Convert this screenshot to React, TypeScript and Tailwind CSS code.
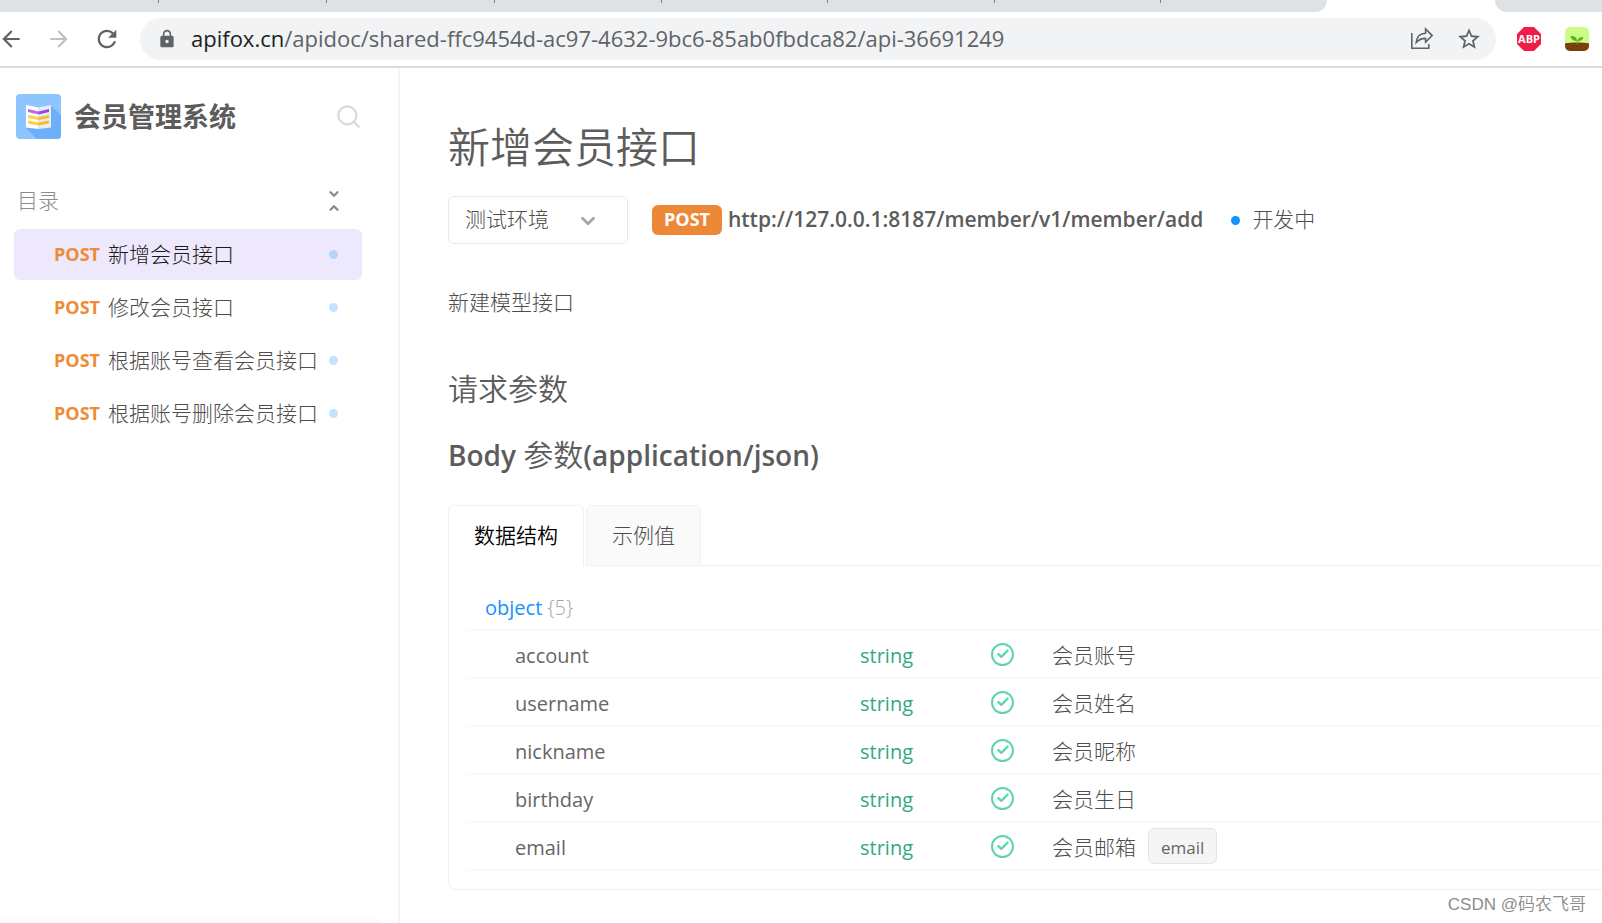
import { Check, ChevronDown, ChevronUp, Search } from 'lucide-react';
import { MdArrowBack, MdArrowForward, MdLock, MdRefresh, MdStarBorder } from 'react-icons/md';

const tabMarks = [158, 326, 494, 661, 827, 994, 1160];

const apis = [
  { name: '新增会员接口', active: true },
  { name: '修改会员接口', active: false },
  { name: '根据账号查看会员接口', active: false },
  { name: '根据账号删除会员接口', active: false },
];

const fields = [
  { name: 'account', type: 'string', desc: '会员账号' },
  { name: 'username', type: 'string', desc: '会员姓名' },
  { name: 'nickname', type: 'string', desc: '会员昵称' },
  { name: 'birthday', type: 'string', desc: '会员生日' },
  { name: 'email', type: 'string', desc: '会员邮箱', format: 'email' },
];

function ShareIcon() {
  return (
    <svg width="24" height="24" viewBox="0 0 24 24" fill="none" stroke="#5f6368" strokeWidth="1.6">
      <path d="M1.8 6v15.2h17V17" />
      <path d="M6.2 15.5C6.6 10 10 6.4 15.6 6.2V2l6.6 6.6-6.6 6.4v-3.6c-4 0-6.8 1.2-9.4 4.1z" />
    </svg>
  );
}

function AbpIcon() {
  return (
    <svg width="24" height="24" viewBox="0 0 24 24">
      <path d="M7 0h10l7 7v10l-7 7H7l-7-7V7z" fill="#f01e46" />
      <text
        x="12"
        y="16"
        textAnchor="middle"
        className="fill-white font-['Open_Sans',sans-serif] text-[11px] font-bold"
      >
        ABP
      </text>
    </svg>
  );
}

function SproutIcon() {
  return (
    <svg width="24" height="24" viewBox="0 0 24 24">
      <defs>
        <clipPath id="sprout">
          <rect width="24" height="24" rx="5" />
        </clipPath>
      </defs>
      <g clipPath="url(#sprout)">
        <rect width="24" height="24" fill="#cdfc86" />
        <path d="M0 16.5c4-1.4 20-1.4 24 0V24H0z" fill="#7a3f0a" />
        <path
          d="M5.5 9c4-.3 6.5 1.5 6.7 4.8C8.5 14.3 6 12.5 5.5 9zM18.500 10c-3.500-.2-5.700 1.100-6.200 4 3.200.3 5.400-1 6.200-4z"
          fill="#58b41c"
        />
        <path d="M12.3 13.5v4" stroke="#58b41c" strokeWidth="1" />
      </g>
    </svg>
  );
}

function BookLogo() {
  return (
    <svg width="45" height="45" viewBox="0 0 45 45" className="shrink-0">
      <rect width="45" height="45" rx="4" fill="#8cc5ff" />
      <path d="M35 12l10 9v20a4 4 0 0 1-4 4H21L10 34z" fill="#6cb0fa" />
      <path d="M10 11l12.5 2.5V35L10 33.5z" fill="#fff" />
      <path d="M35 11l-12.5 2.5V35L35 33.5z" fill="#e9edf2" />
      <path d="M12 15l10.5 2.5v3L12 18z" fill="#b568ee" />
      <path d="M33 15l-10.5 2.5v3L33 18z" fill="#9a45dc" />
      <path d="M12 21l10.5 2v3L12 24zM12 26.5l10.5 2v3L12 29.5z" fill="#ffd042" />
      <path d="M33 21l-10.5 2v3L33 24zM33 26.5l-10.5 2v3L33 29.5z" fill="#f5bd2b" />
    </svg>
  );
}

function BrowserBar() {
  return (
    <header>
      <div className="relative flex h-3 bg-white">
        <div className="w-[1327px] rounded-br-xl bg-[#dee1e6]" />
        <div className="w-[168px]" />
        <div className="flex-1 rounded-bl-xl bg-[#dee1e6]" />
        {tabMarks.map((x) => (
          <span key={x} className="absolute top-0 h-[3px] w-px bg-[#80868b]" style={{ left: x }} />
        ))}
      </div>
      <div className="flex h-14 items-center border-b-2 border-[#dadce0]">
        <button aria-label="Back" className="-ml-0.5 text-[#5f6368]">
          <MdArrowBack size={26} />
        </button>
        <button aria-label="Forward" className="ml-[22px] text-[#bdc1c6]">
          <MdArrowForward size={26} />
        </button>
        <button aria-label="Reload" className="ml-[21px] text-[#5f6368]">
          <MdRefresh size={28} />
        </button>
        <div className="ml-[19px] flex h-[42px] flex-1 items-center rounded-full bg-[#f1f3f4] pr-3.5 pl-[17px]">
          <MdLock size={20} className="text-[#5f6368]" />
          <p className="ml-3.5 flex-1 pb-0.5 text-[22px] text-[#5f6368]">
            <span className="text-[#202124]">apifox.cn</span>
            /apidoc/shared-ffc9454d-ac97-4632-9bc6-85ab0fbdca82/api-36691249
          </p>
          <button aria-label="Share">
            <ShareIcon />
          </button>
          <button aria-label="Bookmark" className="ml-[22px] text-[#5f6368]">
            <MdStarBorder size={26} />
          </button>
        </div>
        <button aria-label="Adblock Plus" className="ml-[21px]">
          <AbpIcon />
        </button>
        <button aria-label="Sprout" className="mr-[13px] ml-6">
          <SproutIcon />
        </button>
      </div>
    </header>
  );
}

function Sidebar() {
  return (
    <aside className="flex w-[400px] shrink-0 flex-col border-r-2 border-[#f5f5f5]">
      <div className="pr-9 pl-3.5">
        <div className="mt-[26px] flex items-center pl-0.5">
          <BookLogo />
          <h2 className="ml-[13px] flex-1 text-[27px] leading-10 font-bold">会员管理系统</h2>
          <button aria-label="搜索" className="text-[#d9d9d9]">
            <Search size={27} strokeWidth={2} />
          </button>
        </div>
        <div className="mt-[46px] mb-3 flex h-8 items-center justify-between pr-[21px] pl-[3px] text-[21px] text-[#8c8c8c]">
          <span>目录</span>
          <button aria-label="收起" className="flex flex-col text-[#8c8c8c]">
            <ChevronDown size={14} strokeWidth={4} />
            <ChevronUp size={14} strokeWidth={4} />
          </button>
        </div>
        <nav className="flex flex-col gap-0.5">
          {apis.map(({ name, active }) => (
            <a
              key={name}
              href="#"
              className={`flex h-[51px] items-center rounded-md pr-6 pl-10 text-[21px] whitespace-nowrap ${
                active ? 'bg-[#ede8fc] text-[#1a1a1a]' : 'text-[#4d4d4d]'
              }`}
            >
              <span className="w-[54px] pb-0.5 text-lg font-bold text-[#ef8b37]">POST</span>
              <span className="flex-1">{name}</span>
              <i className={`size-[9px] rounded-full ${active ? 'bg-[#b6d3fe]' : 'bg-[#c4e3ff]'}`} />
            </a>
          ))}
        </nav>
      </div>
      <div className="mt-auto mr-[18px] h-1 rounded-tr-sm bg-[#fafaff]" />
    </aside>
  );
}

function SchemaTable() {
  return (
    <div className="rounded-bl-lg border border-t-0 border-r-0 border-[#f0f0f0] pt-4 pb-[18px] pl-[18px]">
      <table className="w-full table-fixed text-left text-xl font-normal">
        <colgroup>
          <col className="w-[393px]" />
          <col className="w-[131px]" />
          <col className="w-[61px]" />
          <col />
        </colgroup>
        <tbody>
          <tr className="h-12 border-b-2 border-[#fafafa]">
            <td colSpan={4} className="pt-1 pl-[18px] text-[#1890ff]">
              object <span className="font-light text-[#a6a6a6]">{'{5}'}</span>
            </td>
          </tr>
          {fields.map(({ name, type, desc, format }) => (
            <tr key={name} className="h-12 border-b-2 border-[#fafafa]">
              <td className="pt-1 pl-12 text-[#666]">{name}</td>
              <td className="pt-1 text-[#32a882]">{type}</td>
              <td>
                <span className="flex size-[23px] items-center justify-center rounded-full border-2 border-[#5fd3ab] text-[#5fd3ab]">
                  <Check size={14} strokeWidth={4} />
                </span>
              </td>
              <td>
                <div className="flex items-center text-[21px]">
                  <span className="pt-1 font-light text-[#4d4d4d]">{desc}</span>
                  {format && (
                    <code className="ml-3 flex h-9 items-center rounded-md border border-[#e5e5e5] bg-[#f5f5f5] px-3 pt-1 font-['Open_Sans',sans-serif] text-[17px] text-[#666]">
                      {format}
                    </code>
                  )}
                </div>
              </td>
            </tr>
          ))}
        </tbody>
      </table>
    </div>
  );
}

export default function App() {
  return (
    <div className="flex min-h-screen flex-col overflow-hidden bg-white font-['Open_Sans','Noto_Sans_CJK_SC',sans-serif] text-[#5c5c5c]">
      <BrowserBar />
      <div className="flex flex-1 font-light">
        <Sidebar />
        <main className="min-w-0 flex-1 pl-12">
          <h1 className="mt-[47px] text-[42px] leading-[64px] font-[350]">新增会员接口</h1>
          <div className="mt-[17px] flex h-12 items-center text-[21px]">
            <div className="relative">
              <select
                aria-label="环境"
                className="h-12 w-[180px] appearance-none rounded-md border border-[#e8e8e8] bg-white pl-4 text-[#4d4d4d]"
              >
                <option>测试环境</option>
              </select>
              <ChevronDown
                size={22}
                strokeWidth={3}
                className="pointer-events-none absolute top-[14px] right-[29px] text-[#a6a6a6]"
              />
            </div>
            <span className="ml-6 flex h-[30px] items-center rounded-md bg-[#ed8936] px-3 pb-0.5 text-lg font-bold text-white">
              POST
            </span>
            <span className="ml-1.5 font-semibold">http://127.0.0.1:8187/member/v1/member/add</span>
            <i className="ml-7 size-[9px] rounded-full bg-[#1890ff]" />
            <span className="ml-3 text-[#4d4d4d]">开发中</span>
          </div>
          <p className="mt-[42px] text-[21px] leading-8 text-[#4d4d4d]">新建模型接口</p>
          <h2 className="mt-[51px] text-[30px] leading-10 font-[350]">请求参数</h2>
          <h3 className="mt-[26px] text-[28px] leading-10 font-[350]">
            <span className="font-semibold">Body</span> <span className="text-[30px]">参数</span>
            <span className="font-semibold">(application/json)</span>
          </h3>
          <div role="tablist" className="mt-[30px] flex h-[61px] gap-0.5 text-[21px]">
            <button
              role="tab"
              aria-selected="true"
              className="rounded-t-md border border-b-0 border-[#f0f0f0] px-[25px] font-[350] text-black"
            >
              数据结构
            </button>
            <button
              role="tab"
              aria-selected="false"
              className="rounded-t-md border border-[#f0f0f0] bg-[#fafafa] px-[25px] text-[#4d4d4d]"
            >
              示例值
            </button>
            <div className="-ml-0.5 flex-1 border-b border-[#f0f0f0]" />
          </div>
          <SchemaTable />
        </main>
      </div>
      <p className="absolute right-4 bottom-1.5 font-['Liberation_Sans','Noto_Sans_CJK_SC',sans-serif] text-[17px] font-[350] text-[#8c8c8c]">
        CSDN @码农飞哥
      </p>
    </div>
  );
}
